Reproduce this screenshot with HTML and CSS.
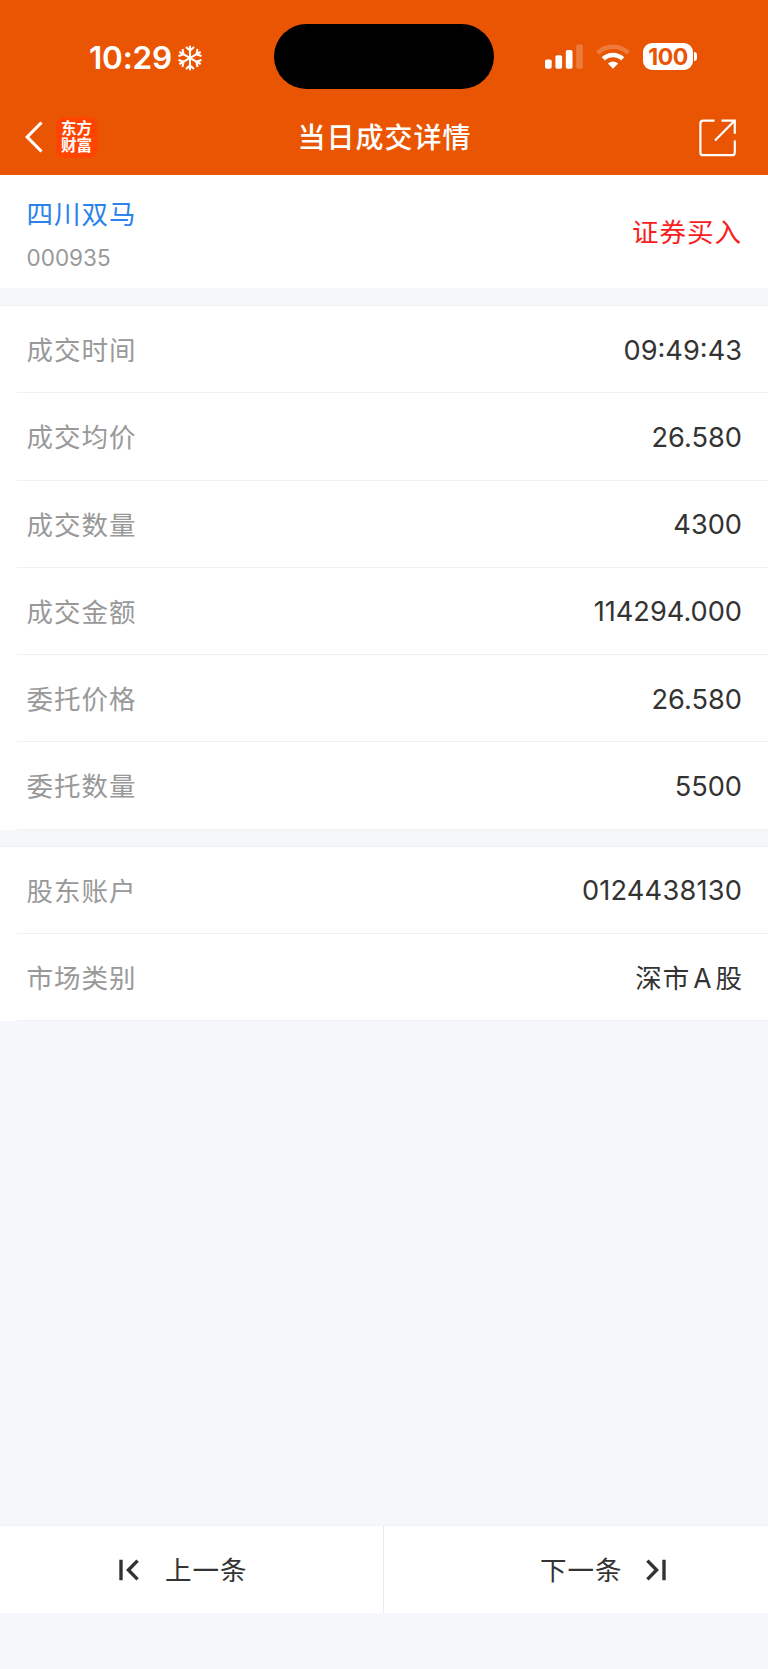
FILE: index.html
```html
<!DOCTYPE html>
<html lang="zh-CN">
<head>
<meta charset="UTF-8" />
<meta name="viewport" content="width=device-width, initial-scale=1" />
<title>当日成交详情</title>
<link rel="stylesheet" href="styles.css">
</head>
<body>
  <header class="header">
    <div class="status-bar">
      <div class="status-left">
        <span class="time">10:29</span>
        <svg class="snow" width="24" height="26" viewBox="-12 -13 24 26" fill="none" stroke="#fff" stroke-width="2">
          <g id="arm"><path d="M0 -12.3V12.3M-4 -11L0 -7.4L4 -11M-4 11L0 7.4L4 11"/></g>
          <use href="#arm" transform="rotate(60)"/>
          <use href="#arm" transform="rotate(120)"/>
        </svg>
      </div>
      <div class="island"></div>
      <div class="status-right">
        <svg class="signal" width="38" height="25" viewBox="0 0 38 25" fill="#fff">
          <rect x="0" y="15.5" width="6.7" height="9.3" rx="1.8"/>
          <rect x="10.4" y="11.2" width="6.7" height="13.6" rx="1.8"/>
          <rect x="20.8" y="6" width="6.7" height="18.8" rx="1.8"/>
          <rect x="31.2" y="0.5" width="6.7" height="24.3" rx="1.8" opacity="0.22"/>
        </svg>
        <svg class="wifi" width="34" height="25" viewBox="0 0 34 25">
          <path d="M1.7 9A22 22 0 0 1 32.3 9" fill="none" stroke="#fff" stroke-width="4.6" opacity="0.22"/>
          <path d="M7.3 14.9A14 14 0 0 1 26.7 14.9" fill="none" stroke="#fff" stroke-width="4.6"/>
          <path d="M17 24.8L11.9 19.6A7.3 7.3 0 0 1 22.1 19.6Z" fill="#fff"/>
        </svg>
        <div class="battery">100</div>
        <div class="battery-tip"></div>
      </div>
    </div>
    <nav class="nav">
      <div class="nav-left">
        <svg width="18" height="32" viewBox="0 0 18 32" fill="none" stroke="#fff" stroke-width="3.2">
          <path d="M16.5 1.5L2.2 16L16.5 30.5"/>
        </svg>
        <div class="logo"><span>东方</span><span>财富</span></div>
      </div>
      <h1>当日成交详情</h1>
      <svg class="share" width="38" height="38" viewBox="0 0 38 38" fill="none" stroke="#fff" stroke-width="2.2">
        <path d="M15.5 1.6H4.2Q1.4 1.6 1.4 4.4V33.4Q1.4 36.2 4.2 36.2H33Q35.8 36.2 35.8 33.4V21.5"/>
        <path d="M22.5 1.6H35.8V14.8M35.8 1.6L16 21.6"/>
      </svg>
    </nav>
  </header>

  <section class="stock">
    <div>
      <div class="stock-name">四川双马</div>
      <div class="stock-code">000935</div>
    </div>
    <div class="side">证券买入</div>
  </section>

  <section class="list first">
    <div class="row"><span class="label">成交时间</span><span class="value">09:49:43</span></div>
    <div class="row"><span class="label">成交均价</span><span class="value">26.580</span></div>
    <div class="row"><span class="label">成交数量</span><span class="value">4300</span></div>
    <div class="row"><span class="label">成交金额</span><span class="value">114294.000</span></div>
    <div class="row"><span class="label">委托价格</span><span class="value">26.580</span></div>
    <div class="row"><span class="label">委托数量</span><span class="value">5500</span></div>
  </section>

  <section class="list">
    <div class="row"><span class="label">股东账户</span><span class="value account">0124438130</span></div>
    <div class="row"><span class="label">市场类别</span><span class="value cn">深市<i>A</i>股</span></div>
  </section>

  <footer class="pager">
    <div class="page-btn prev">
      <svg width="20" height="22" viewBox="0 0 20 22" fill="none" stroke="#333" stroke-width="3.4">
        <path d="M2 .8V21.2M18.6 1.6L9.4 11L18.6 20.4"/>
      </svg>
      <span>上一条</span>
    </div>
    <div class="page-btn next">
      <span>下一条</span>
      <svg width="20" height="22" viewBox="0 0 20 22" fill="none" stroke="#333" stroke-width="3.4">
        <path d="M18 .8V21.2M1.4 1.6L10.6 11L1.4 20.4"/>
      </svg>
    </div>
  </footer>
</body>
</html>
```
FILE: styles.css
```css
* {
  box-sizing: border-box;
}
body {
  margin: 0;
  min-height: 1669px;
  display: flex;
  flex-direction: column;
  background: #f6f7fa;
  color: #333;
  font-family: Inter, "Noto Sans CJK SC", sans-serif;
}
svg {
  display: block;
  flex: none;
}

/* header */
.header {
  height: 175px;
  background: #ea5504;
  color: #fff;
}
.status-bar {
  height: 99px;
  padding: 14px 71px 0 89px;
  display: grid;
  grid-template-columns: 185px 220px 1fr;
  align-items: center;
}
.status-left {
  display: flex;
  align-items: center;
}
.time {
  width: 89px;
  padding-top: 2px;
  font-size: 31.5px;
  font-weight: 600;
  line-height: 36px;
  letter-spacing: -0.2px;
}
.snow {
  margin-top: 2px;
}
.island {
  height: 65px;
  border-radius: 33px;
  background: #000;
}
.status-right {
  display: flex;
  align-items: center;
  justify-content: flex-end;
}
.wifi {
  margin: 0 13px 0 13px;
}
.battery {
  width: 50px;
  height: 27px;
  padding-top: 1px;
  border-radius: 9px;
  background: #fff;
  color: #ea5504;
  font-size: 23px;
  font-weight: 700;
  line-height: 26px;
  letter-spacing: -0.5px;
  text-align: center;
}
.battery-tip {
  width: 3px;
  height: 9px;
  margin-left: 1px;
  border-radius: 0 4px 4px 0;
  background: #fff;
}
.nav {
  height: 76px;
  padding: 2px 31px 0 25px;
  display: grid;
  grid-template-columns: 1fr auto 1fr;
  align-items: center;
}
.nav-left {
  padding-bottom: 2px;
  display: flex;
  align-items: center;
  gap: 13px;
}
.logo {
  width: 41px;
  height: 41px;
  border-radius: 8px;
  background: #ff4400;
  display: flex;
  flex-direction: column;
  align-items: center;
  justify-content: center;
  font-size: 15.5px;
  font-weight: 700;
  line-height: 17px;
}
.nav h1 {
  margin: 0;
  padding-left: 7px;
  font-size: 28px;
  font-weight: 500;
  line-height: 40px;
  letter-spacing: 1px;
}
.share {
  justify-self: end;
}

/* stock summary */
.stock {
  height: 113px;
  padding: 3px 26px 0 26.5px;
  display: flex;
  justify-content: space-between;
  align-items: center;
  background: #fff;
}
.stock-name,
.side,
.label,
.cn,
.page-btn {
  font-size: 26.5px;
  letter-spacing: 1px;
}
.stock-name {
  line-height: 40px;
  color: #2b82e8;
}
.stock-code {
  margin-top: 9px;
  font-size: 22.5px;
  line-height: 30px;
  color: #999;
}
.side {
  padding-bottom: 6px;
  color: #f91d20;
}

/* detail rows */
.list {
  margin-top: 17px;
  background: #fff;
  box-shadow: 0 -1px 0 #eeeff1;
}
.first {
  margin-top: 18px;
}
.row {
  height: 87.25px;
  margin-left: 17px;
  padding: 0 26px 0 9.5px;
  display: flex;
  justify-content: space-between;
  align-items: center;
  border-bottom: 1px solid #f0f1f2;
}
.label {
  padding-bottom: 1px;
  color: #999;
}
.value {
  padding-top: 2px;
  font-size: 27.2px;
}
.account {
  letter-spacing: 0.2px;
}
.value.cn {
  padding: 0 0 1px;
  margin-right: -1px;
  font-size: 26.5px;
}
.cn i {
  margin: 0 3px;
  font-style: normal;
}

/* bottom pager */
.pager {
  height: 88px;
  margin: auto 0 56px;
  display: flex;
  background: #fff;
  border-top: 1px solid #f0f1f3;
}
.page-btn {
  width: 50%;
  display: flex;
  align-items: center;
  gap: 26px;
}
.page-btn span {
  padding-bottom: 2px;
}
.prev {
  padding-left: 119px;
  border-right: 1px solid #e9eaec;
}
.next {
  padding-left: 156px;
  gap: 23px;
}
```
